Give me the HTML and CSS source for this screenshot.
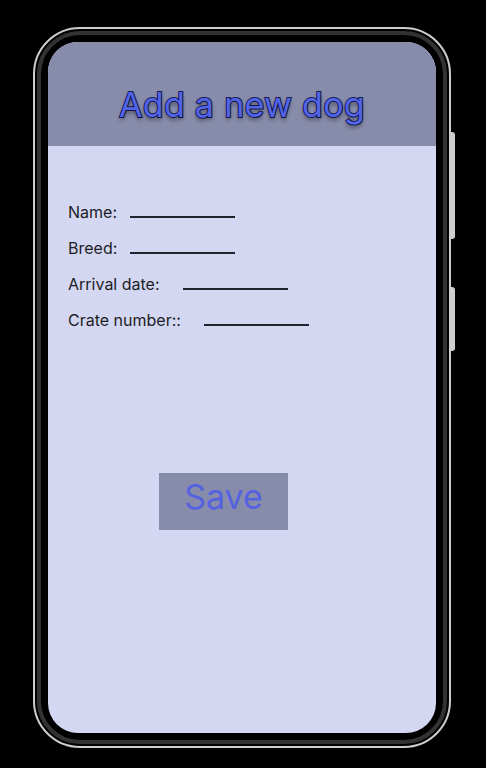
FILE: index.html
```html
<!DOCTYPE html>
<html>
<head>
<meta charset="utf-8">
<link rel="stylesheet" href="styles.css">
</head>
<body>
<div class="phone">
  <span class="side-btn side-btn--top"></span>
  <span class="side-btn side-btn--bottom"></span>
  <div class="bezel">
    <div class="screen">
      <header class="header">
        <h1 class="title">Add a new dog</h1>
      </header>
      <main class="content">
        <div class="form">
          <div class="row"><span class="label">Name:</span><span class="field field--near"></span></div>
          <div class="row"><span class="label">Breed:</span><span class="field field--near"></span></div>
          <div class="row"><span class="label">Arrival date:</span><span class="field field--far"></span></div>
          <div class="row"><span class="label">Crate number::</span><span class="field field--far"></span></div>
        </div>
        <button class="save">Save</button>
      </main>
    </div>
  </div>
</div>
</body>
</html>
```
FILE: styles.css
```css
* { box-sizing: border-box; }
html, body { margin: 0; padding: 0; background: #000; }
body {
  width: 486px;
  height: 768px;
  padding-top: 27px;
  padding-left: 33px;
  font-family: Inter, "Noto Sans", sans-serif;
  overflow: hidden;
}
.phone {
  position: relative;
  width: 418px;
  height: 721px;
  border: 2px solid #cdcdcd;
  border-radius: 47px;
  padding: 2px;
  background: #000;
}
.side-btn {
  position: absolute;
  right: -6px;
  width: 4px;
  background: #cfcfcf;
  border-radius: 0 3px 3px 0;
}
.side-btn--top { top: 103px; height: 107px; }
.side-btn--bottom { top: 258px; height: 64px; }
.bezel {
  height: 100%;
  border: 4px solid #323232;
  border-radius: 43px;
  padding: 7px;
  background: #000;
}
.screen {
  height: 100%;
  border-radius: 30px;
  overflow: hidden;
  background: #d4d7f2;
  display: flex;
  flex-direction: column;
}
.header {
  height: 104px;
  flex: none;
  background: #888cab;
  display: flex;
  justify-content: center;
  align-items: center;
  padding-top: 20px;
}
.title {
  margin: 0;
  font-family: Inter, "Liberation Sans", sans-serif;
  font-weight: 400;
  font-size: 34px;
  color: #5264e8;
  -webkit-text-stroke: 2px #161b55;
  paint-order: stroke fill;
  text-shadow: 0 3px 4px rgba(0, 0, 0, 0.45);
  letter-spacing: 0.3px;
}
.content {
  padding: 57px 0 0 20px;
}
.form {
  display: flex;
  flex-direction: column;
  gap: 18px;
}
.row {
  display: flex;
  align-items: baseline;
  font-size: 16px;
  line-height: 18px;
  color: #1d1d24;
}
.field {
  display: inline-block;
  width: 105px;
  height: 12px;
  border-bottom: 2px solid #22232c;
}
.field--near { margin-left: 13px; }
.field--far { margin-left: 23px; }
.save {
  display: block;
  margin: 144px 0 0 91px;
  width: 129px;
  height: 57px;
  border: none;
  background: #888cab;
  color: #5562e0;
  font-family: Inter, sans-serif;
  font-size: 34px;
  line-height: 1;
  padding: 0 0 9px;
}
```
